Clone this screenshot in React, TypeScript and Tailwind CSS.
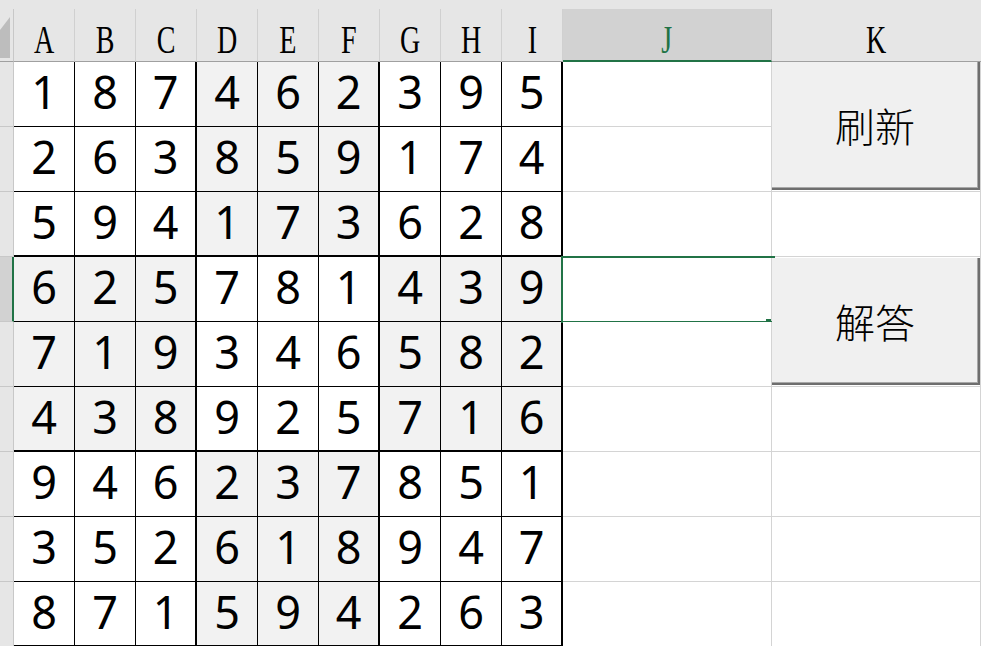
import React from "react";

const grid = [
  [1, 8, 7, 4, 6, 2, 3, 9, 5],
  [2, 6, 3, 8, 5, 9, 1, 7, 4],
  [5, 9, 4, 1, 7, 3, 6, 2, 8],
  [6, 2, 5, 7, 8, 1, 4, 3, 9],
  [7, 1, 9, 3, 4, 6, 5, 8, 2],
  [4, 3, 8, 9, 2, 5, 7, 1, 6],
  [9, 4, 6, 2, 3, 7, 8, 5, 1],
  [3, 5, 2, 6, 1, 8, 9, 4, 7],
  [8, 7, 1, 5, 9, 4, 2, 6, 3],
];

const letters = ["A", "B", "C", "D", "E", "F", "G", "H", "I"];

function ColHeader({ label }: { label: string }) {
  return (
    <div className="w-[61px] h-full shrink-0 bg-[#e6e6e6] border-r border-b border-r-[#d0d0d0] border-b-[#a0a0a0] flex justify-center items-start pt-[11px]">
      <span className="inline-block scale-x-[0.72] text-[39px] leading-none text-black font-['Liberation_Serif',serif]">
        {label}
      </span>
    </div>
  );
}

export default function App() {
  return (
    <div className="relative w-[981px] h-[646px] overflow-hidden bg-white select-none">
      {/* top strip */}
      <div className="h-[9px] bg-[#e6e6e6]" />
      {/* header row */}
      <div className="flex h-[53px]">
        <div className="w-[14px] h-full shrink-0 bg-[#e6e6e6] border-r border-b border-r-[#c8c8c8] border-b-[#a0a0a0]">
          <svg width="13" height="52" viewBox="0 0 13 52">
            <polygon points="0,21 10,8 10,49 0,49" fill="#bdbdbd" />
          </svg>
        </div>
        {letters.map((l) => (
          <ColHeader key={l} label={l} />
        ))}
        <div className="w-[209px] h-full shrink-0 bg-[#d2d2d2] border-r border-r-[#c0c0c0] border-b-2 border-b-[#217346] flex justify-center items-start pt-[11px]">
          <span className="inline-block scale-x-[0.72] text-[39px] leading-none text-[#217346] font-['Liberation_Serif',serif]">
            J
          </span>
        </div>
        <div className="w-[209px] h-full shrink-0 bg-[#e6e6e6] border-b border-b-[#a0a0a0] flex justify-center items-start pt-[11px]">
          <span className="inline-block scale-x-[0.72] text-[39px] leading-none text-black font-['Liberation_Serif',serif]">
            K
          </span>
        </div>
      </div>

      {/* body rows */}
      {grid.map((row, r) => {
        const thickBottom = r % 3 === 2;
        return (
          <div key={r} className="flex h-[65px]">
            <div
              className={
                r === 3
                  ? "w-[14px] h-full shrink-0 bg-[#d2d2d2] border-r-2 border-r-[#217346] border-b border-b-[#c8c8c8]"
                  : "w-[14px] h-full shrink-0 bg-[#e6e6e6] border-r border-r-[#c8c8c8] border-b border-b-[#c8c8c8]"
              }
            />
            {row.map((v, c) => {
              const shaded = (Math.floor(r / 3) + Math.floor(c / 3)) % 2 === 1;
              const thickRight = c % 3 === 2;
              return (
                <div
                  key={c}
                  className={[
                    "w-[61px] h-full shrink-0 border-black flex justify-center items-start pt-[7px]",
                    shaded ? "bg-[#f2f2f2]" : "bg-white",
                    thickRight ? "border-r-2" : "border-r",
                    thickBottom ? "border-b-2" : "border-b",
                  ].join(" ")}
                >
                  <span className="text-[45px] leading-none text-black font-['Noto_Sans',sans-serif]">
                    {v}
                  </span>
                </div>
              );
            })}
            <div className="relative w-[209px] h-full shrink-0 bg-white border-r border-b border-[#d4d4d4]">
              {r === 3 && (
                <div className="absolute -left-[2px] -top-[1px] -right-[4px] -bottom-[2px] border-2 border-[#217346]">
                  <div className="absolute right-[2px] -bottom-[3px] w-[5px] h-[5px] bg-[#217346]" />
                </div>
              )}
            </div>
            <div className="w-[209px] h-full shrink-0 bg-white border-r border-b border-[#d4d4d4]" />
          </div>
        );
      })}

      {/* floating form buttons */}
      <div className="absolute left-[772px] top-[62px] w-[208px] h-[128px] bg-[#f0f0f0] border-r-2 border-b-2 border-[#6e6e6e] shadow-[inset_-1px_-1px_0_#a8a8a8] flex items-center justify-center">
        <span className="text-[40px] leading-none text-black font-light font-['Noto_Sans_CJK_SC','Noto_Sans_CJK_JP',sans-serif]">
          刷新
        </span>
      </div>
      <div className="absolute left-[772px] top-[258px] w-[208px] h-[127px] bg-[#f0f0f0] border-r-2 border-b-2 border-[#6e6e6e] shadow-[inset_-1px_-1px_0_#a8a8a8] flex items-center justify-center">
        <span className="text-[40px] leading-none text-black font-light font-['Noto_Sans_CJK_SC','Noto_Sans_CJK_JP',sans-serif]">
          解答
        </span>
      </div>
    </div>
  );
}
